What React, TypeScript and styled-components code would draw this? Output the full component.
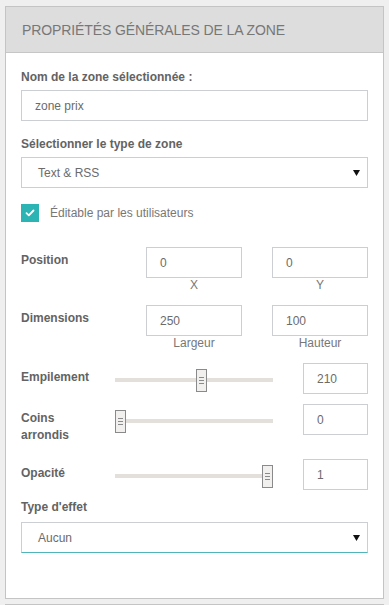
import React from "react";
import styled, { createGlobalStyle } from "styled-components";

const Global = createGlobalStyle`
  html, body { margin: 0; padding: 0; }
  body {
    background: #efefef;
    font-family: "Liberation Sans", Arial, sans-serif;
    font-size: 12px;
    color: #666;
  }
  * { box-sizing: border-box; }
`;

const Page = styled.div`
  padding: 6px 5px 0 5px;
`;

const Panel = styled.section`
  width: 379px;
  background: #fff;
  border: 1px solid #c4c4c4;
  & + & { margin-top: 5px; }
`;

const Header = styled.header`
  height: 46px;
  background: #dddddd;
  border-bottom: 1px solid #c6c6c6;
  display: flex;
  align-items: center;
  padding: 0 0 0 16px;
  font-size: 14px;
  color: #777;
  text-transform: uppercase;
  letter-spacing: -0.1px;
`;

const Body = styled.div`
  padding: 16px 15px 45px 15px;
  display: flex;
  flex-direction: column;
`;

const Block = styled.div<{ $mt?: number }>`
  margin-top: ${(p) => p.$mt ?? 0}px;
`;

const Label = styled.label<{ $mb?: number }>`
  display: block;
  font-weight: bold;
  font-size: 12px;
  line-height: 16px;
  color: #636363;
  margin-bottom: ${(p) => p.$mb ?? 5}px;
`;

const TextInput = styled.div`
  height: 31px;
  border: 1px solid #cbcfd3;
  background: #fff;
  display: flex;
  align-items: center;
  padding: 0 13px;
  font-size: 12px;
  color: #6b6b6b;
`;

const Select = styled.div<{ $focus?: boolean }>`
  height: 31px;
  border: 1px solid #cbcfd3;
  border-bottom-color: ${(p) => (p.$focus ? "#4fb5bb" : "#cbcfd3")};
  background: #fff;
  display: flex;
  align-items: center;
  justify-content: space-between;
  padding: 0 7px 0 16px;
  font-size: 12px;
  color: #6b6b6b;
`;

const CheckRow = styled.div`
  display: flex;
  align-items: center;
  gap: 11px;
  font-size: 12px;
  color: #777;
`;

const CheckBox = styled.span`
  width: 18px;
  height: 18px;
  background: #2cb4b4;
  display: flex;
  align-items: center;
  justify-content: center;
`;

const PairRow = styled.div`
  display: grid;
  grid-template-columns: 95px 1fr 1fr;
  column-gap: 30px;
  align-items: start;
`;

const RowLabel = styled.div<{ $pt?: number }>`
  font-weight: bold;
  font-size: 12px;
  line-height: 17px;
  color: #636363;
  padding-top: ${(p) => p.$pt ?? 5}px;
`;

const PairCell = styled.div`
  display: flex;
  flex-direction: column;
`;

const SubLabel = styled.div`
  text-align: center;
  font-size: 12px;
  line-height: 14px;
  color: #777;
`;

const SliderRow = styled.div`
  display: grid;
  grid-template-columns: 94px 1fr 65px;
  align-items: start;
`;

const TrackWrap = styled.div`
  padding: 15px 30px 0 0;
`;

const Track = styled.div`
  position: relative;
  height: 4px;
  background: #e3e0db;
`;

const Thumb = styled.span`
  position: absolute;
  top: -9px;
  width: 11px;
  height: 23px;
  background: #f1f0ee;
  border: 1px solid #8a8a8a;
  display: flex;
  flex-direction: column;
  align-items: center;
  justify-content: center;
  gap: 2px;
  & > i {
    display: block;
    width: 5px;
    height: 1px;
    background: #8a8a8a;
  }
`;

const Arrow = () => (
  <svg width="7" height="6" viewBox="0 0 7 6">
    <path d="M0 0 H7 L3.5 6 Z" fill="#111" />
  </svg>
);

const Check = () => (
  <svg width="10" height="8" viewBox="0 0 10 8">
    <path d="M1.5 4.2 L3.8 6.3 L8.5 1.5" stroke="#fff" strokeWidth="1.8" fill="none" strokeLinecap="round" strokeLinejoin="round" />
  </svg>
);

type SliderProps = { label: React.ReactNode; value: string; left: number };

const Slider = ({ label, value, left }: SliderProps) => (
  <SliderRow>
    <RowLabel $pt={6}>{label}</RowLabel>
    <TrackWrap>
      <Track>
        <Thumb style={{ left }}>
          <i />
          <i />
          <i />
        </Thumb>
      </Track>
    </TrackWrap>
    <TextInput>{value}</TextInput>
  </SliderRow>
);

export default function App() {
  return (
    <>
      <Global />
      <Page>
        <Panel>
          <Header>Propriétés générales de la zone</Header>
          <Body>
            <Block>
              <Label>Nom de la zone sélectionnée :</Label>
              <TextInput>zone prix</TextInput>
            </Block>
            <Block $mt={15}>
              <Label>Sélectionner le type de zone</Label>
              <Select>
                <span>Text &amp; RSS</span>
                <Arrow />
              </Select>
            </Block>
            <Block $mt={16}>
              <CheckRow>
                <CheckBox>
                  <Check />
                </CheckBox>
                <span>Éditable par les utilisateurs</span>
              </CheckRow>
            </Block>
            <Block $mt={25}>
              <PairRow>
                <RowLabel>Position</RowLabel>
                <PairCell>
                  <TextInput>0</TextInput>
                  <SubLabel>X</SubLabel>
                </PairCell>
                <PairCell>
                  <TextInput>0</TextInput>
                  <SubLabel>Y</SubLabel>
                </PairCell>
              </PairRow>
            </Block>
            <Block $mt={13}>
              <PairRow>
                <RowLabel>Dimensions</RowLabel>
                <PairCell>
                  <TextInput>250</TextInput>
                  <SubLabel>Largeur</SubLabel>
                </PairCell>
                <PairCell>
                  <TextInput>100</TextInput>
                  <SubLabel>Hauteur</SubLabel>
                </PairCell>
              </PairRow>
            </Block>
            <Block $mt={13}>
              <Slider label="Empilement" value="210" left={81} />
            </Block>
            <Block $mt={10}>
              <Slider
                label={
                  <>
                    Coins
                    <br />
                    arrondis
                  </>
                }
                value="0"
                left={0}
              />
            </Block>
            <Block $mt={15}>
              <Slider label="Opacité" value="1" left={147} />
            </Block>
            <Block $mt={9}>
              <Label $mb={7}>Type d'effet</Label>
              <Select $focus>
                <span>Aucun</span>
                <Arrow />
              </Select>
            </Block>
          </Body>
        </Panel>
        <Panel>
          <Header />
        </Panel>
      </Page>
    </>
  );
}
